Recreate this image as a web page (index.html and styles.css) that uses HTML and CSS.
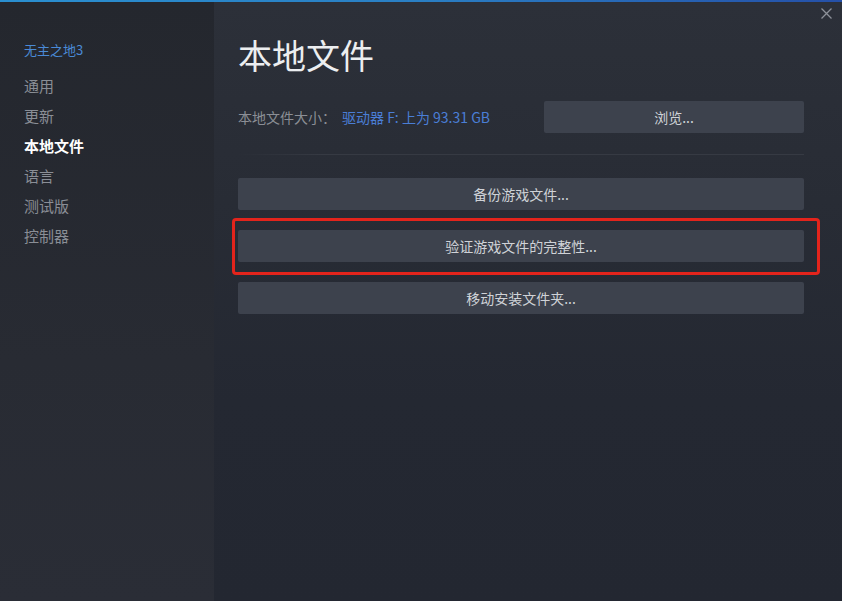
FILE: index.html
```html
<!DOCTYPE html>
<html lang="zh-CN">
<head>
<meta charset="utf-8">
<title>本地文件</title>
<link rel="stylesheet" href="styles.css">
</head>
<body>
<div class="window">
  <div class="topline"></div>
  <div class="body">
    <nav class="sidebar">
      <div class="game">无主之地3</div>
      <ul class="menu">
        <li>通用</li>
        <li>更新</li>
        <li class="active">本地文件</li>
        <li>语言</li>
        <li>测试版</li>
        <li>控制器</li>
      </ul>
    </nav>
    <main class="content">
      <button class="close" aria-label="关闭">
        <svg width="11" height="11" viewBox="0 0 11 11"><path d="M0.5 0.5 L10.5 10.5 M10.5 0.5 L0.5 10.5" stroke="#8d9199" stroke-width="1.3" fill="none"/></svg>
      </button>
      <h1 class="title">本地文件</h1>
      <div class="size-row">
        <span class="label">本地文件大小：</span>
        <span class="link">驱动器 F: 上为 93.31 GB</span>
        <button class="btn browse">浏览...</button>
      </div>
      <div class="divider"></div>
      <div class="actions">
        <button class="btn">备份游戏文件...</button>
        <div class="highlight">
          <button class="btn">验证游戏文件的完整性...</button>
          <span class="mark"></span>
        </div>
        <button class="btn">移动安装文件夹...</button>
      </div>
    </main>
  </div>
</div>
</body>
</html>
```

FILE: styles.css
```css
* { box-sizing: border-box; }
html, body { margin: 0; padding: 0; }
body {
  width: 842px;
  height: 601px;
  overflow: hidden;
  background: #242832;
  font-family: "Noto Sans CJK SC", "Noto Sans", sans-serif;
}
.window {
  width: 842px;
  height: 601px;
  display: flex;
  flex-direction: column;
}
.topline {
  height: 2px;
  flex: none;
  background: linear-gradient(to right, #2a8fd0, #2a7fc4 50%, #2550a8);
}
.body {
  flex: 1;
  display: flex;
}
.sidebar {
  width: 214px;
  flex: none;
  padding: 38px 0 0 24px;
  background: linear-gradient(to bottom, #24272e, #282b33 60%, #2a2d36);
}
.game {
  font-size: 13px;
  line-height: 20px;
  color: #4a8ad6;
  margin-bottom: 11px;
}
.menu {
  list-style: none;
  margin: 0;
  padding: 0;
}
.menu li {
  font-size: 15px;
  line-height: 30px;
  color: #8a8e96;
}
.menu li.active {
  color: #ffffff;
  font-weight: bold;
}
.content {
  flex: 1;
  position: relative;
  padding: 33px 38px 0 24px;
  background: linear-gradient(to bottom, #2c3039 0, #282c35 200px, #242832 400px, #232731 100%);
}
.close {
  position: absolute;
  top: 6px;
  right: 10px;
  width: 11px;
  height: 11px;
  padding: 0;
  border: 0;
  background: none;
  display: flex;
}
.title {
  margin: 0;
  font-size: 34px;
  line-height: 40px;
  font-weight: normal;
  color: #eceef0;
}
.size-row {
  margin-top: 26px;
  height: 32px;
  display: flex;
  align-items: center;
  font-size: 14px;
}
.label {
  color: #8b8e95;
  width: 104px;
}
.link {
  color: #4a7ed6;
}
.btn {
  display: block;
  width: 100%;
  height: 32px;
  border: 0;
  border-radius: 2px;
  background: #3d424d;
  color: #cfd2d7;
  font-family: inherit;
  font-size: 14px;
  padding: 0;
}
.btn.browse {
  width: 260px;
  margin-left: auto;
}
.divider {
  margin-top: 21px;
  height: 1px;
  background: linear-gradient(to right, rgba(58,62,71,0) 0, #363a43 15%, #363a43 100%);
}
.actions {
  margin-top: 23px;
  display: flex;
  flex-direction: column;
  gap: 20px;
}
.highlight {
  position: relative;
}
.mark {
  position: absolute;
  top: -12px;
  bottom: -13px;
  left: -6px;
  right: -16px;
  border: 3px solid #e3241c;
  border-radius: 4px;
  pointer-events: none;
}
```
